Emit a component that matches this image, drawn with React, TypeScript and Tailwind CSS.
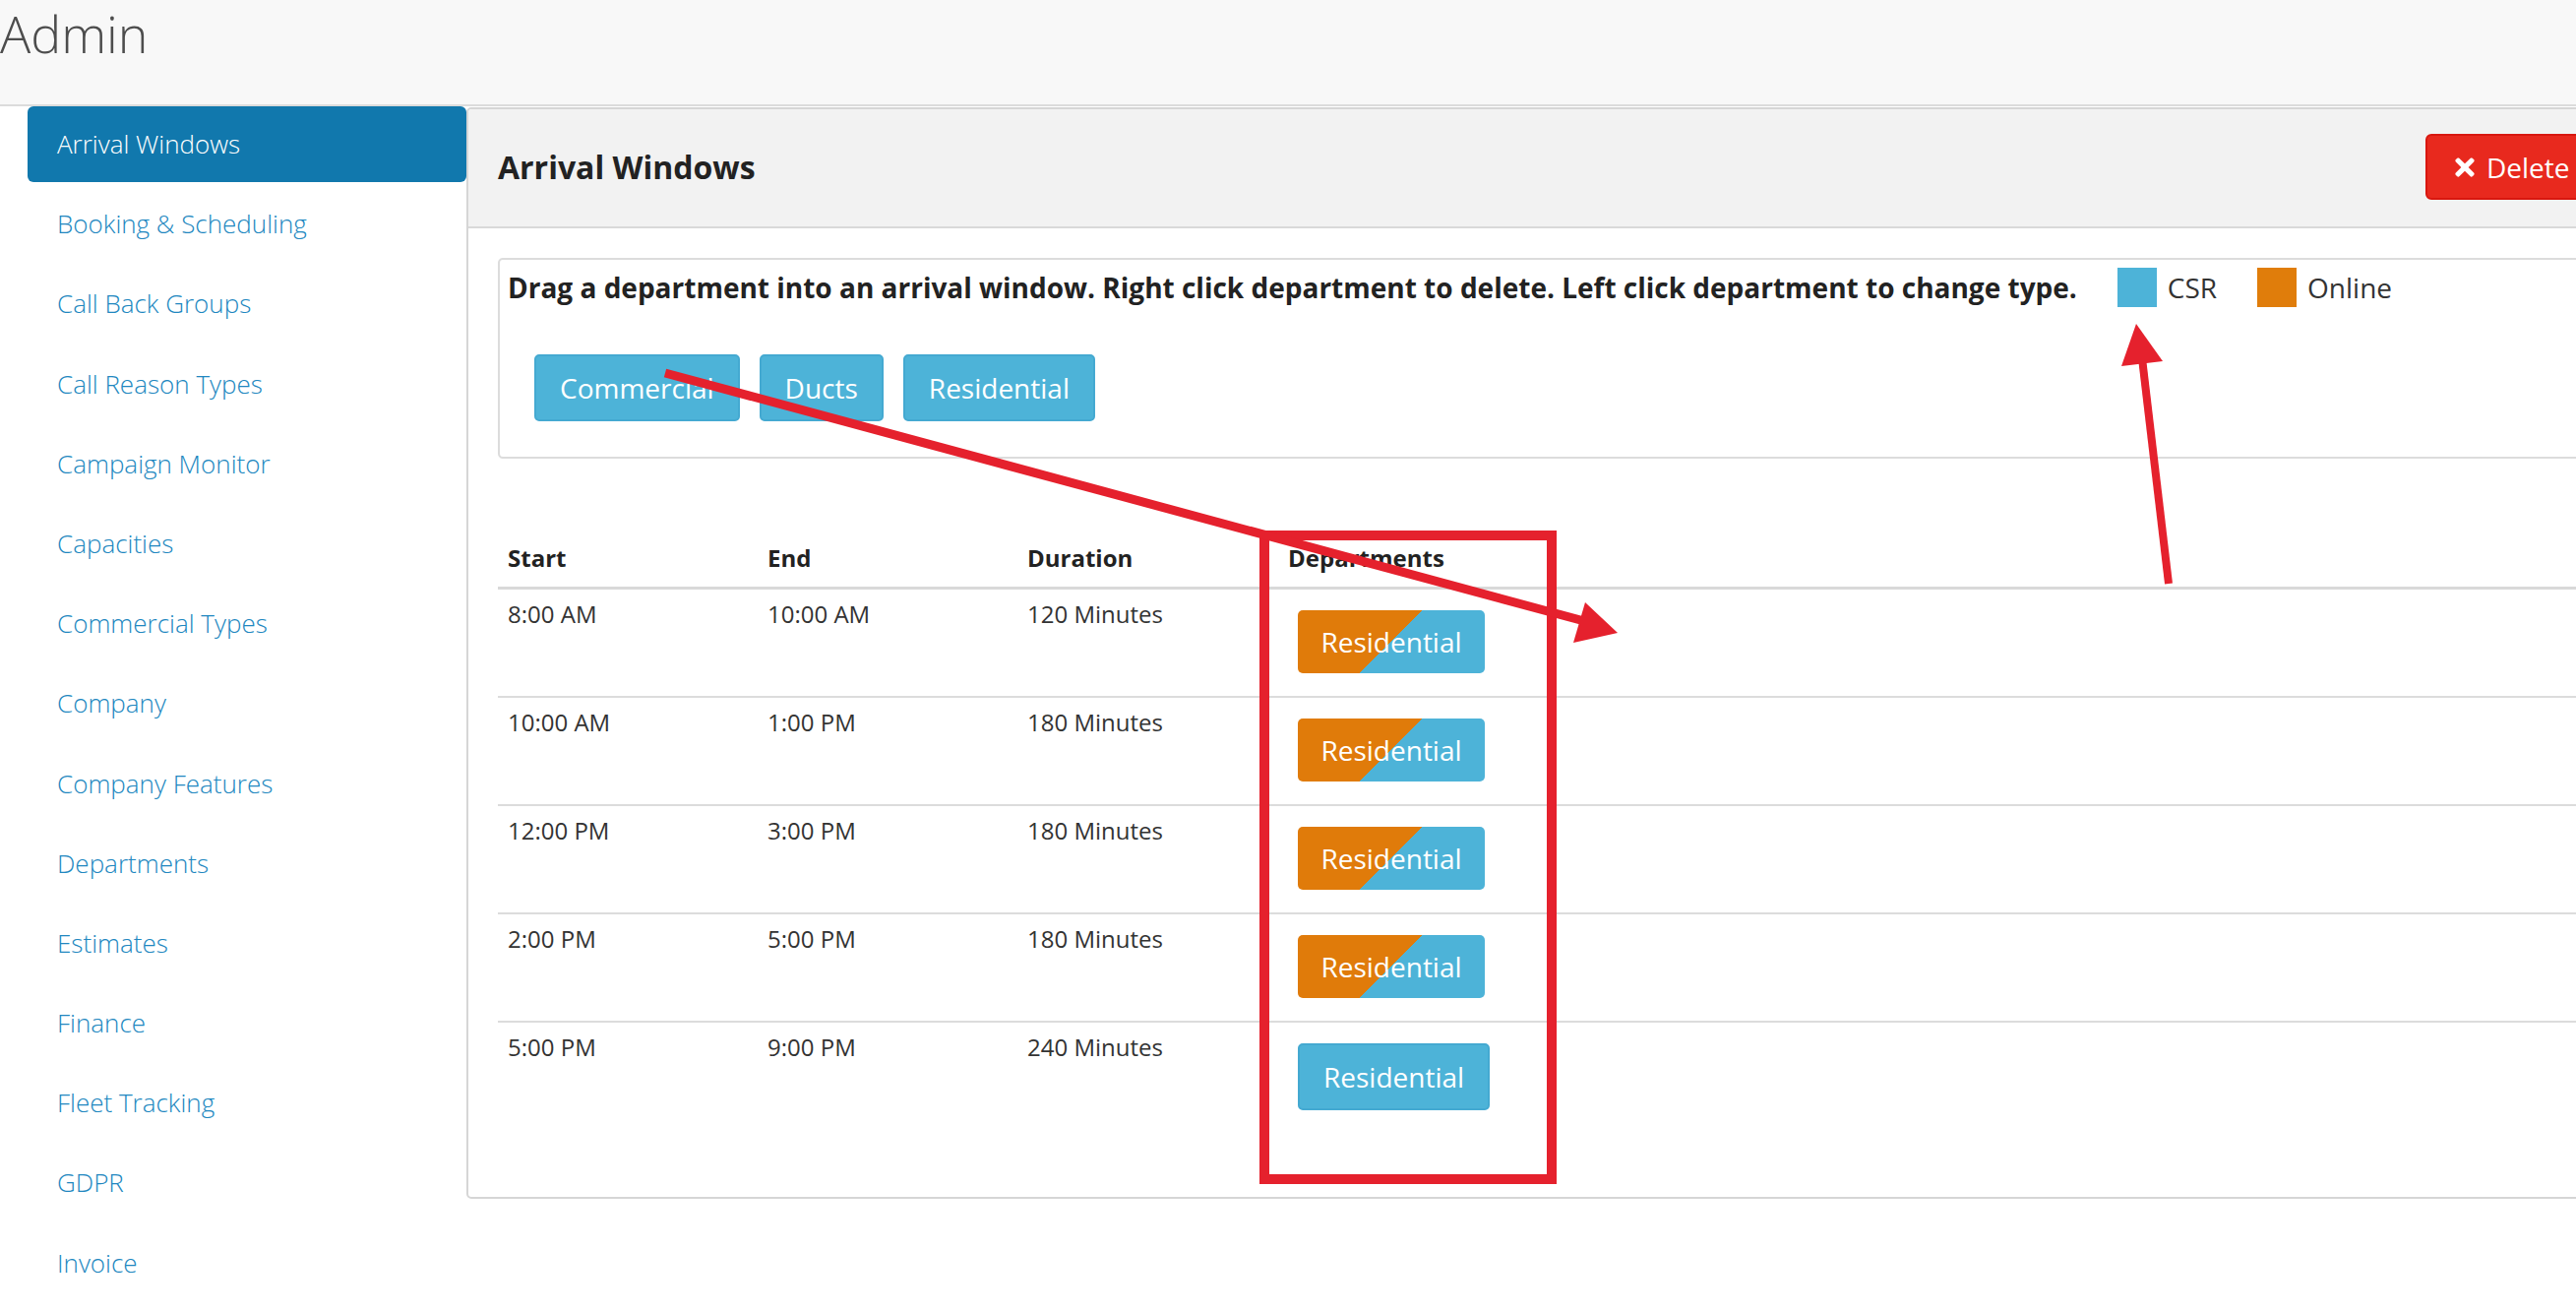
import { FaTimes } from 'react-icons/fa';

const navItems = [
  'Arrival Windows',
  'Booking & Scheduling',
  'Call Back Groups',
  'Call Reason Types',
  'Campaign Monitor',
  'Capacities',
  'Commercial Types',
  'Company',
  'Company Features',
  'Departments',
  'Estimates',
  'Finance',
  'Fleet Tracking',
  'GDPR',
  'Invoice',
];

const windows = [
  { start: '8:00 AM', end: '10:00 AM', duration: '120 Minutes', split: true },
  { start: '10:00 AM', end: '1:00 PM', duration: '180 Minutes', split: true },
  { start: '12:00 PM', end: '3:00 PM', duration: '180 Minutes', split: true },
  { start: '2:00 PM', end: '5:00 PM', duration: '180 Minutes', split: true },
  { start: '5:00 PM', end: '9:00 PM', duration: '240 Minutes', split: false },
];

function DeptButton({ label }: { label: string }) {
  return (
    <div className="h-[68px] px-[24px] flex items-center border-2 border-[#44a9d1] bg-[#4db3d8] rounded-[5px] text-white text-[28px] leading-none">
      {label}
    </div>
  );
}

function SplitButton({ label }: { label: string }) {
  return (
    <div className="h-[64px] w-[190px] flex items-center justify-center rounded-[5px] bg-[linear-gradient(135deg,#e07b0a_50%,#4db3d8_50%)] text-white text-[28px] leading-none">
      {label}
    </div>
  );
}

export default function App() {
  return (
    <div className="relative w-[2618px] h-[1334px] overflow-hidden bg-white font-['Open_Sans',sans-serif] text-[#333]">
      {/* Top bar */}
      <header className="h-[108px] bg-[#f8f8f8] border-b-2 border-[#dcdcdc]">
        <h1 className="text-[52px] font-light leading-none pt-[8px] text-[#4d4d4d]">Admin</h1>
      </header>

      <div className="flex pl-[28px]">
        {/* Sidebar */}
        <nav className="w-[446px] shrink-0 flex flex-col gap-[4.2px]">
          {navItems.map((item, i) => (
            <div
              key={item}
              className={
                i === 0
                  ? 'h-[77px] flex items-center pl-[30px] rounded-[6px] bg-[#1178ad] text-white text-[26px] font-light'
                  : 'h-[77px] flex items-center pl-[30px] text-[#2187c0] text-[26px] font-light'
              }
            >
              {item}
            </div>
          ))}
        </nav>

        {/* Panel */}
        <section className="w-[2200px] shrink-0 mt-[1px] self-start border-2 border-[#d6d6d6] rounded-[5px]">
          <div className="h-[121px] flex items-center justify-between pl-[30px] pr-[27px] bg-[#f2f2f2] border-b-2 border-[#d9d9d9] rounded-t-[4px]">
            <h2 className="text-[32px] font-bold text-[#222] -mt-[2px]">Arrival Windows</h2>
            <button className="w-[180px] h-[67px] -mt-[2px] flex items-center pl-[28px] gap-[12px] bg-[#e8291e] border-2 border-[#d8170f] rounded-[6px] text-white text-[28px]">
              <FaTimes className="w-[20px] h-[28px]" />
              Delete
            </button>
          </div>

          <div className="px-[30px] pt-[30px] pb-[69px]">
            {/* Instructions */}
            <div className="h-[204px] border-2 border-[#dcdcdc] rounded-[5px] pl-[8px] pt-[9px]">
              <div className="flex items-center h-[38px]">
                <p className="text-[28px] font-bold leading-[38px] text-[#222] whitespace-nowrap">
                  Drag a department into an arrival window. Right click department to delete. Left click department to change type.
                </p>
                <div className="flex items-center ml-[41px] gap-[11px]">
                  <span className="w-[40px] h-[40px] bg-[#4db3d8]" />
                  <span className="text-[28px]">CSR</span>
                  <span className="w-[40px] h-[40px] bg-[#e07d0b] ml-[30px]" />
                  <span className="text-[28px]">Online</span>
                </div>
              </div>
              <div className="flex gap-[20px] ml-[27px] mt-[49px]">
                <DeptButton label="Commercial" />
                <DeptButton label="Ducts" />
                <DeptButton label="Residential" />
              </div>
            </div>

            {/* Table */}
            <div className="mt-[74px] grid grid-cols-[264px_264px_265px_1fr] text-[24px]">
              {['Start', 'End', 'Duration', 'Departments'].map((h) => (
                <div key={h} className="pl-[10px] pt-[10px] pb-[12px] leading-[34px] font-bold text-[#222] border-b-[3px] border-[#d9d9d9]">
                  {h}
                </div>
              ))}
              {windows.map((w, i) => {
                const line = i < windows.length - 1 ? 'h-[110px] border-b-2 border-[#dcdcdc]' : 'h-[108px]';
                return [
                  <div key={`s${i}`} className={`pl-[10px] pt-[8px] leading-[34px] ${line}`}>{w.start}</div>,
                  <div key={`e${i}`} className={`pl-[10px] pt-[8px] leading-[34px] ${line}`}>{w.end}</div>,
                  <div key={`d${i}`} className={`pl-[10px] pt-[8px] leading-[34px] ${line}`}>{w.duration}</div>,
                  <div key={`p${i}`} className={`pl-[20px] pt-[21px] ${line}`}>
                    <div className="inline-flex">
                      {w.split ? <SplitButton label="Residential" /> : <DeptButton label="Residential" />}
                    </div>
                  </div>,
                ];
              })}
            </div>
          </div>
        </section>
      </div>

      {/* Annotations */}
      <svg className="absolute inset-0 pointer-events-none" width="2618" height="1334" viewBox="0 0 2618 1334">
        <rect x="1285" y="544" width="292" height="654" fill="none" stroke="#e5212d" strokeWidth="10" />
        <line x1="676" y1="379" x2="1610" y2="631" stroke="#e5212d" strokeWidth="9" />
        <polygon points="1644,643 1611,612 1599,653" fill="#e5212d" />
        <line x1="2204" y1="593" x2="2177" y2="364" stroke="#e5212d" strokeWidth="8" />
        <polygon points="2171,329 2156,372 2198,367" fill="#e5212d" />
      </svg>
    </div>
  );
}
